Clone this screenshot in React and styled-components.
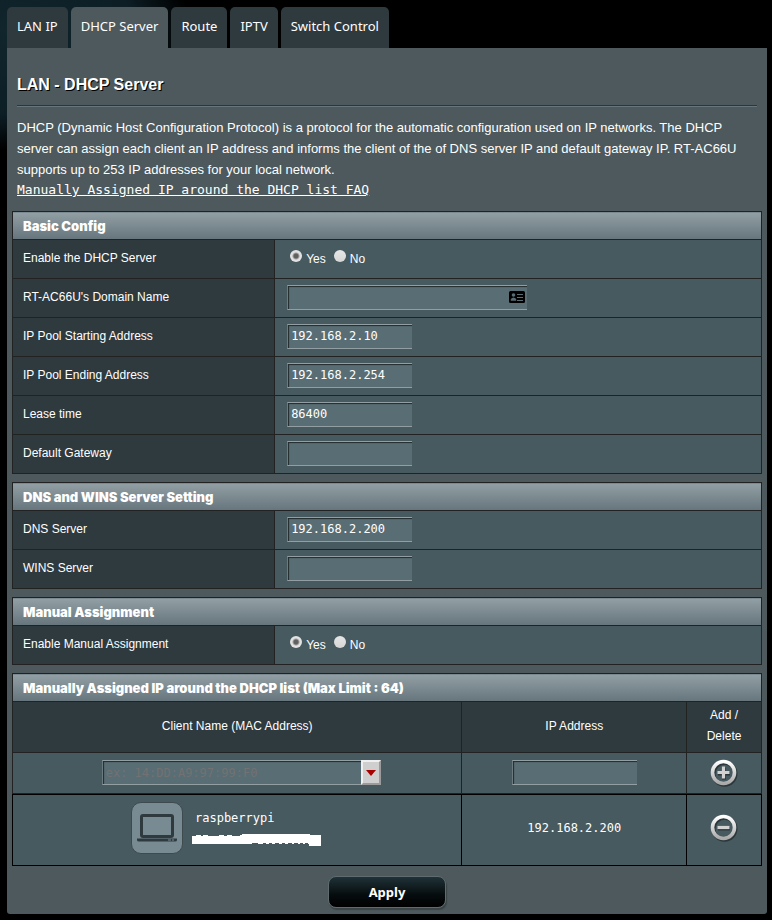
import React, { useState } from "react";
import styled, { createGlobalStyle } from "styled-components";

const GlobalStyle = createGlobalStyle`
  *, *::before, *::after { box-sizing: border-box; }
  body {
    margin: 0;
    background: #000 radial-gradient(ellipse 190px 120px at 0 30px, #11252d 0%, #0d1e25 70%, #000 100%) no-repeat;
    color: #fff;
    font-family: "Liberation Sans", Arial, sans-serif;
    font-size: 12px;
  }
`;

const mono = `"DejaVu Sans Mono", "Lucida Console", monospace`;
const tahoma = `"Noto Sans", Tahoma, sans-serif`;

const Page = styled.main`
  padding: 7px 5px 6px 7px;
`;

const Tabs = styled.nav`
  display: flex;
  gap: 3px;
`;

const Tab = styled.a`
  height: 41px;
  padding: 0 10px;
  border-radius: 5px 5px 0 0;
  background: ${(p) => (p.$active ? "#4d595d" : "#2f3a3e")};
  color: #fff;
  font: 13px/39px ${tahoma};
  text-decoration: none;
  white-space: nowrap;
`;

const Panel = styled.section`
  padding: 24px 5px 6px;
  background: #4d595d;
  border-radius: 0 0 3px 3px;
`;

const Intro = styled.header`
  padding: 0 5px;
  margin-bottom: 11px;
`;

const Title = styled.h1`
  margin: 0 0 8px;
  padding-bottom: 8px;
  border-bottom: 1px solid #2b373b;
  box-shadow: 0 1px 0 #67767d;
  font-size: 16px;
  line-height: 25px;
  text-shadow: 1px 1px 0 #000;
`;

const Lead = styled.p`
  margin: 0;
  padding-top: 3px;
  font-size: 13px;
  line-height: 21px;
`;

const FaqLink = styled.a`
  display: block;
  color: #fff;
  font: 13px/20px ${mono};
  text-decoration: underline;
`;

const Sections = styled.form`
  display: flex;
  flex-direction: column;
  gap: 8px;
`;

const Table = styled.table`
  width: 100%;
  table-layout: fixed;
  border-collapse: collapse;
`;

const Heading = styled.th`
  height: 28px;
  padding: 0 10px;
  border: 1px solid #222;
  background: linear-gradient(#92a0a5, #66757c);
  font: 900 13px/20px Inter, Arial, sans-serif;
  text-align: left;
`;

const LabelCell = styled.th`
  height: 39px;
  padding: 0 10px 2px;
  border: 1px solid #222;
  background: #2f3a3e;
  font-weight: normal;
  line-height: 21px;
  text-align: left;
`;

const ValueCell = styled.td`
  height: 39px;
  padding: 0 12px 2px;
  border: 1px solid #222;
  background: #475a5f;
`;

const ColumnHead = styled(LabelCell)`
  height: 51px;
  text-align: center;
`;

const ListCell = styled.td`
  height: ${(p) => (p.$entry ? 71 : 42)}px;
  padding: 0 0 ${(p) => (p.$entry ? 4 : 2)}px;
  border: 1px solid ${(p) => (p.$entry ? "#000" : "#222")};
  border-bottom-color: #000;
  background: #475a5f;
  box-shadow: ${(p) => (p.$entry ? "none" : "inset 0 -1px 0 #222")};
  font: 12px/21px ${mono};
  text-align: center;
`;

const Col = styled.col`
  width: ${(p) => p.$share}%;
`;

const TextInput = styled.input`
  display: block;
  width: ${(p) => p.$width || 125}px;
  height: 25px;
  margin: ${(p) => (p.$centered ? "0 auto" : "0")};
  padding: 0 3px;
  border: solid #929ea1;
  border-width: 1px 0 1px 1px;
  border-left-color: #6c7b80;
  border-radius: 0;
  outline: none;
  background: #596d74;
  box-shadow: inset 1px 1px 1px #222b2e;
  color: #fff;
  font: 12px ${mono};
  &::placeholder { color: #727272; opacity: 1; }
`;

const DomainField = styled.div`
  display: flex;
  align-items: center;
  svg { margin-left: -18px; }
`;

const RadioLine = styled.div`
  display: flex;
  gap: 8px;
  padding-left: 3px;
`;

const RadioLabel = styled.label`
  display: flex;
  gap: 4px;
  line-height: 21px;
  padding-top: 2px;
`;

const Radio = styled.input`
  appearance: none;
  width: 12px;
  height: 12px;
  margin: 1px 0 0;
  border-radius: 50%;
  background: linear-gradient(#e6e6e6, #d6d6d6);
  &:checked {
    background: radial-gradient(circle, #606060 2px, #e2e2e2 4px);
  }
`;

const Combo = styled.div`
  display: flex;
  justify-content: center;
  padding-left: 8px;
`;

const DropButton = styled.button`
  display: grid;
  place-items: center;
  width: 20px;
  height: 25px;
  padding: 0;
  border: 2px solid;
  border-color: #f0f0f0 #9b9b9b #9b9b9b #f0f0f0;
  background: #cfcfcf;
`;

const IconButton = styled.button`
  display: block;
  width: 28px;
  height: 28px;
  margin: 0 auto;
  padding: 0;
  border: 0;
  background: none;
`;

const Client = styled.div`
  display: flex;
  align-items: center;
  gap: 9px;
  padding-left: 118px;
`;

const DeviceTile = styled.div`
  display: grid;
  place-items: center;
  width: 52px;
  height: 52px;
  border: 1px solid #3f4a4e;
  border-radius: 10px;
  background: #788b92;
`;

const ClientText = styled.div`
  display: flex;
  flex-direction: column;
  gap: 5px;
  padding-bottom: 2px;
  text-align: left;
`;

const ClientName = styled.span`
  padding-left: 3px;
`;

const Actions = styled.div`
  display: flex;
  justify-content: center;
  padding: 2px 0 0;
`;

const ApplyButton = styled.button`
  width: 118px;
  height: 32px;
  border: 1px solid #5f6b6f;
  border-radius: 8px;
  background: linear-gradient(#1f3237, #060c0e 60%, #000);
  box-shadow: 1px 2px 1px #3a4447;
  color: #fff;
  font: bold 13px ${tahoma};
`;

function YesNo({ name }) {
  const [value, setValue] = useState("Yes");
  return (
    <RadioLine>
      {["Yes", "No"].map((option) => (
        <RadioLabel key={option}>
          <Radio type="radio" name={name} checked={value === option} onChange={() => setValue(option)} />
          {option}
        </RadioLabel>
      ))}
    </RadioLine>
  );
}

function ContactCard() {
  return (
    <svg width="16" height="12" viewBox="0 0 16 12" aria-hidden="true">
      <rect width="16" height="12" rx="1.5" fill="#000" />
      <circle cx="4.5" cy="4" r="1.8" fill="#596d74" />
      <path d="M1.8 9.8V8.6Q2 6.8 4.5 6.4Q7 6.8 7.2 8.6V9.8Z" fill="#596d74" />
      <path d="M8 3.5h6M8 6.5h6M8 9.5h6" stroke="#596d74" />
    </svg>
  );
}

function RoundIcon({ plus }) {
  const id = plus ? "ring-add" : "ring-remove";
  return (
    <svg width="28" height="28" viewBox="0 0 28 28" aria-hidden="true">
      <defs>
        <linearGradient id={id} x1="0" y1="0" x2="0" y2="1">
          <stop offset="0" stopColor="#fff" />
          <stop offset="1" stopColor="#aaa" />
        </linearGradient>
      </defs>
      <circle cx="14.5" cy="14.8" r="11" fill="none" stroke="#2b373b" strokeWidth="4" />
      <circle cx="13.5" cy="13.5" r="11" fill="none" stroke={`url(#${id})`} strokeWidth="3.6" />
      <path d={plus ? "M8 14.5h12M14 8.5v12" : "M8 14.5h12"} stroke="#2b373b" strokeWidth="4" />
      <path d={plus ? "M7.5 13.5h12M13.5 7.5v12" : "M7.5 13.5h12"} stroke="#d2d2d2" strokeWidth="3.2" />
    </svg>
  );
}

function Laptop() {
  return (
    <svg width="40" height="28" viewBox="0 0 40 28" aria-hidden="true">
      <rect x="4.5" y="1.5" width="31" height="21" rx="1.5" fill="none" stroke="#2f3a3e" strokeWidth="3" />
      <path d="M0 24.5h40v1.5q0 1.5-2 1.5H2q-2 0-2-1.5z" fill="#2f3a3e" />
      <path d="M31 26h3M35 26h2" stroke="#788b92" />
    </svg>
  );
}

function MaskedAddress() {
  return (
    <svg width="129" height="12" viewBox="0 0 129 12" aria-hidden="true">
      <path
        d="M0 2h4V1h5v1h2V1h5v1h11V1h5v1h3V1h5v1h8V1h2V0h68v1h11v11h-12v-2h-1V9h-3v1h-2V9h-3v1h-2V9h-4v1h-2V9h-4v1h-3V9h-3v1h-3V9h-4v1h-3V9h-3v1h-3V9h-3v1h-5V9h-6v1H0z"
        fill="#fff"
      />
    </svg>
  );
}

const tabs = ["LAN IP", "DHCP Server", "Route", "IPTV", "Switch Control"];

const sections = [
  {
    title: "Basic Config",
    rows: [
      { label: "Enable the DHCP Server", kind: "radio", id: "dhcp-enable" },
      { label: "RT-AC66U's Domain Name", kind: "domain", id: "domain" },
      { label: "IP Pool Starting Address", value: "192.168.2.10", id: "pool-start" },
      { label: "IP Pool Ending Address", value: "192.168.2.254", id: "pool-end" },
      { label: "Lease time", value: "86400", id: "lease" },
      { label: "Default Gateway", value: "", id: "gateway" },
    ],
  },
  {
    title: "DNS and WINS Server Setting",
    rows: [
      { label: "DNS Server", value: "192.168.2.200", id: "dns" },
      { label: "WINS Server", value: "", id: "wins" },
    ],
  },
  {
    title: "Manual Assignment",
    rows: [{ label: "Enable Manual Assignment", kind: "radio", id: "manual-enable" }],
  },
];

function Field({ row }) {
  if (row.kind === "radio") return <YesNo name={row.id} />;
  if (row.kind === "domain")
    return (
      <DomainField>
        <TextInput id={row.id} $width={240} />
        <ContactCard />
      </DomainField>
    );
  return <TextInput id={row.id} defaultValue={row.value} />;
}

function ConfigTable({ title, rows }) {
  return (
    <Table>
      <colgroup>
        <Col $share={35} />
        <Col $share={65} />
      </colgroup>
      <thead>
        <tr>
          <Heading colSpan={2}>{title}</Heading>
        </tr>
      </thead>
      <tbody>
        {rows.map((row) => (
          <tr key={row.id}>
            <LabelCell scope="row">
              {row.kind === "radio" ? row.label : <label htmlFor={row.id}>{row.label}</label>}
            </LabelCell>
            <ValueCell>
              <Field row={row} />
            </ValueCell>
          </tr>
        ))}
      </tbody>
    </Table>
  );
}

function ClientTable() {
  return (
    <Table>
      <colgroup>
        <Col $share={60} />
        <Col $share={30} />
        <Col $share={10} />
      </colgroup>
      <thead>
        <tr>
          <Heading colSpan={3}>Manually Assigned IP around the DHCP list (Max Limit : 64)</Heading>
        </tr>
        <tr>
          <ColumnHead>Client Name (MAC Address)</ColumnHead>
          <ColumnHead>IP Address</ColumnHead>
          <ColumnHead>Add / Delete</ColumnHead>
        </tr>
      </thead>
      <tbody>
        <tr>
          <ListCell>
            <Combo>
              <TextInput $width={259} placeholder="ex: 14:DD:A9:97:99:F0" aria-label="Client MAC address" />
              <DropButton type="button" aria-label="Choose a client">
                <svg width="10" height="6" viewBox="0 0 10 6" aria-hidden="true">
                  <path d="M0 0h10L5 6z" fill="#a80000" />
                </svg>
              </DropButton>
            </Combo>
          </ListCell>
          <ListCell>
            <TextInput $centered aria-label="Client IP address" />
          </ListCell>
          <ListCell>
            <IconButton type="button" aria-label="Add">
              <RoundIcon plus />
            </IconButton>
          </ListCell>
        </tr>
        <tr>
          <ListCell $entry>
            <Client>
              <DeviceTile>
                <Laptop />
              </DeviceTile>
              <ClientText>
                <ClientName>raspberrypi</ClientName>
                <MaskedAddress />
              </ClientText>
            </Client>
          </ListCell>
          <ListCell $entry>192.168.2.200</ListCell>
          <ListCell $entry>
            <IconButton type="button" aria-label="Delete">
              <RoundIcon />
            </IconButton>
          </ListCell>
        </tr>
      </tbody>
    </Table>
  );
}

export default function App() {
  return (
    <Page>
      <GlobalStyle />
      <Tabs>
        {tabs.map((name) => (
          <Tab key={name} href="#" $active={name === "DHCP Server"}>
            {name}
          </Tab>
        ))}
      </Tabs>
      <Panel>
        <Intro>
          <Title>LAN - DHCP Server</Title>
          <Lead>
            DHCP (Dynamic Host Configuration Protocol) is a protocol for the automatic configuration used on IP
            networks. The DHCP server can assign each client an IP address and informs the client of the of DNS server
            IP and default gateway IP. RT-AC66U supports up to 253 IP addresses for your local network.
          </Lead>
          <FaqLink href="#">Manually Assigned IP around the DHCP list FAQ</FaqLink>
        </Intro>
        <Sections onSubmit={(e) => e.preventDefault()}>
          {sections.map((s) => (
            <ConfigTable key={s.title} {...s} />
          ))}
          <ClientTable />
          <Actions>
            <ApplyButton type="submit">Apply</ApplyButton>
          </Actions>
        </Sections>
      </Panel>
    </Page>
  );
}
